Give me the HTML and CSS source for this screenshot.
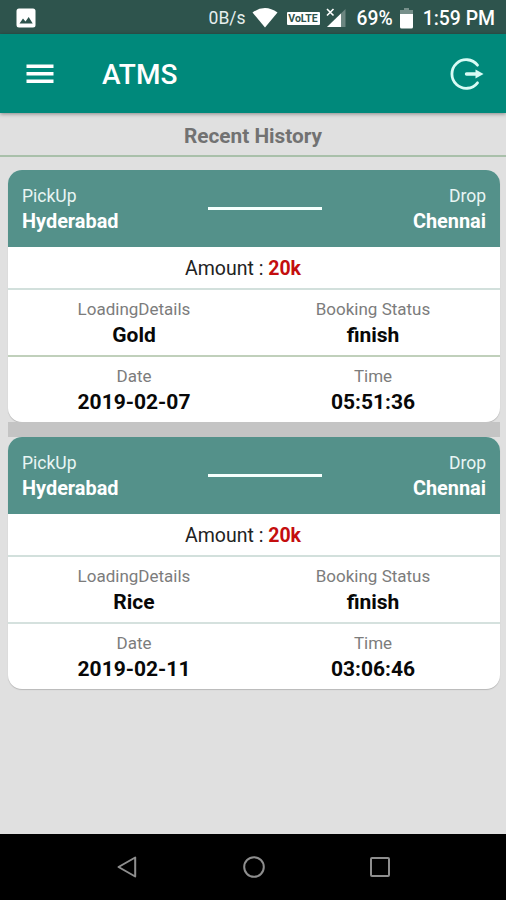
FILE: index.html
```
<!DOCTYPE html>
<html lang="en">
<head>
<meta charset="utf-8">
<title>ATMS</title>
<link rel="stylesheet" href="styles.css">
</head>
<body>
<div class="screen">
  <div class="status">
    <svg class="picture" width="20" height="20" viewBox="0 0 20 20"><rect x=".5" y=".5" width="19" height="19" rx="2.5" fill="#fff"/><path d="M3.5 15.5 7 10.5l2.500 3 3.200-4.500 4 6.500z" fill="#2e544d"/></svg>
    <span class="rate">0B/s</span>
    <svg class="wifi" width="26" height="20" viewBox="0 0 26 20"><path d="M.5 4.500Q13-4.500 25.500 4.500L13 19.500z" fill="#fff"/></svg>
    <span class="volte">VoLTE</span>
    <svg class="signal" width="20" height="20" viewBox="0 0 20 20"><path d="M19.500 1v18H1z" fill="#6c8681"/><path d="M15 5.500V19H1z" fill="#fff"/><path d="M0 0h9v9H0z" fill="#2e544d"/><path d="m1 1 6.500 6.500m0-6.500L1 7.500" stroke="#fff" stroke-width="1.600"/></svg>
    <span class="percent">69%</span>
    <svg class="battery" width="13" height="21" viewBox="0 0 13 21"><path d="M4 0h5v2h4v5H0V2h4z" fill="#77908b"/><path d="M0 6h13v13q0 1.500-1.500 1.500h-10Q0 20.500 0 19z" fill="#fff"/></svg>
    <span class="clock">1:59 PM</span>
  </div>
  <header class="appbar">
    <svg class="menu" width="28" height="20" viewBox="0 0 28 20"><path d="M.5 2.200h27M.5 9.700h27M.5 17.200h27" stroke="#fff" stroke-width="3.400"/></svg>
    <h1>ATMS</h1>
    <svg class="logout" width="34" height="34" viewBox="0 0 34 34" fill="none" stroke="#d9fbf5" stroke-width="2.800"><path d="M27.500 8.200A14.300 14.300 0 1 0 27.500 25.800" stroke-linecap="round"/><path d="M16.500 17h9" stroke-width="3.400" stroke-linecap="round"/><path d="m25.500 12.500 8 4.500-8 4.500z" fill="#d9fbf5" stroke="none"/></svg>
  </header>
  <h2>Recent History</h2>
  <main class="list">
    <article class="card">
      <div class="route">
        <div><p class="place-label">PickUp</p><p class="place">Hyderabad</p></div>
        <i class="dash"></i>
        <div class="drop"><p class="place-label">Drop</p><p class="place">Chennai</p></div>
      </div>
      <p class="amount">Amount : <b>20k</b></p>
      <div class="row olive">
        <div><p class="label">LoadingDetails</p><p class="value">Gold</p></div>
        <div><p class="label">Booking Status</p><p class="value">finish</p></div>
      </div>
      <div class="row">
        <div><p class="label">Date</p><p class="value">2019-02-07</p></div>
        <div><p class="label">Time</p><p class="value">05:51:36</p></div>
      </div>
    </article>
    <div class="divider"></div>
    <article class="card">
      <div class="route">
        <div><p class="place-label">PickUp</p><p class="place">Hyderabad</p></div>
        <i class="dash"></i>
        <div class="drop"><p class="place-label">Drop</p><p class="place">Chennai</p></div>
      </div>
      <p class="amount">Amount : <b>20k</b></p>
      <div class="row">
        <div><p class="label">LoadingDetails</p><p class="value">Rice</p></div>
        <div><p class="label">Booking Status</p><p class="value">finish</p></div>
      </div>
      <div class="row">
        <div><p class="label">Date</p><p class="value">2019-02-11</p></div>
        <div><p class="label">Time</p><p class="value">03:06:46</p></div>
      </div>
    </article>
  </main>
  <nav class="nav">
    <svg width="22" height="24" viewBox="0 0 22 24"><path d="M19.200 2.500v19L2.500 12z"/></svg>
    <svg width="24" height="24" viewBox="0 0 24 24"><circle cx="12" cy="12" r="9.800"/></svg>
    <svg width="22" height="22" viewBox="0 0 22 22"><rect x="2" y="2" width="18" height="18" rx="1"/></svg>
  </nav>
</div>
</body>
</html>
```
FILE: styles.css
```
* { box-sizing: border-box; }
body { margin: 0; font-family: Roboto, sans-serif; }
h1, h2, p { margin: 0; }
svg { display: block; flex: none; }
.screen { width: 506px; height: 900px; display: flex; flex-direction: column; background: #e0e0e0; overflow: hidden; }
.status { height: 34px; flex: none; display: flex; align-items: center; padding: 2px 11px 0 16px; background: #2e544d; color: #fff; white-space: nowrap; }
.rate { margin-left: auto; font-size: 17.5px; color: #e6efed; }
.wifi { margin-left: 6px; }
.volte { margin-left: 9px; width: 33px; height: 13px; background: #fff; color: #2e544d; font-size: 10.5px; font-weight: 700; line-height: 13px; text-align: center; border-radius: 1px; }
.signal { margin-left: 6px; }
.percent { margin-left: 11px; font-size: 19.3px; font-weight: 500; }
.battery { margin-left: 7px; }
.clock { margin-left: 10px; font-size: 19.4px; font-weight: 500; }
.appbar { height: 79px; flex: none; display: flex; align-items: center; padding: 0 22px 0 26px; background: #00897b; box-shadow: 0 1px 4px rgba(0,0,0,.4); position: relative; }
.appbar h1 { margin-left: 48px; padding-top: 2px; font-size: 28px; line-height: 34px; font-weight: 500; color: #fff; }
.logout { margin-left: auto; }
h2 { height: 44px; flex: none; border-bottom: 2px solid #a9c0aa; font-size: 20.8px; font-weight: 700; line-height: 46px; text-align: center; color: #727272; }
.list { margin: 13px 6px 0 8px; display: flex; flex-direction: column; flex: none; }
.divider { height: 15px; background: #c4c4c4; }
.card { height: 252px; border-radius: 14px; overflow: hidden; background: #fff; box-shadow: 0 1px 1px rgba(0,0,0,.18); }
.route { height: 77px; padding: 14px; display: grid; grid-template-columns: 186px 114px 1fr; background: #54918a; color: #fff; }
.place-label { font-size: 17.5px; line-height: 25px; color: #e9f6f4; }
.place { font-size: 19.9px; line-height: 25px; font-weight: 700; }
.dash { height: 3px; margin-top: 23px; background: #f6fffd; }
.drop { text-align: right; }
.amount { height: 43px; border-bottom: 2px solid #d2e0dc; font-size: 19.5px; line-height: 43px; text-align: center; padding-right: 22px; color: #222; }
.amount b { color: #c40e0e; font-weight: 700; }
.row { height: 67px; display: grid; grid-template-columns: 252px 226px; text-align: center; padding-top: 7px; border-bottom: 2px solid #d5e1de; }
.row.olive { border-color: #c0d0bb; }
.row:last-child { border: 0; height: 65px; }
.label { font-size: 17px; line-height: 25px; color: #7c7c7c; }
.value { font-size: 21px; line-height: 26px; font-weight: 700; color: #080808; }
.nav { margin-top: auto; height: 66px; flex: none; display: flex; justify-content: space-between; align-items: center; padding: 0 115px 0 116px; background: #000; }
.nav svg { fill: none; stroke: #8e8e8e; stroke-width: 2; stroke-linejoin: round; }
```
